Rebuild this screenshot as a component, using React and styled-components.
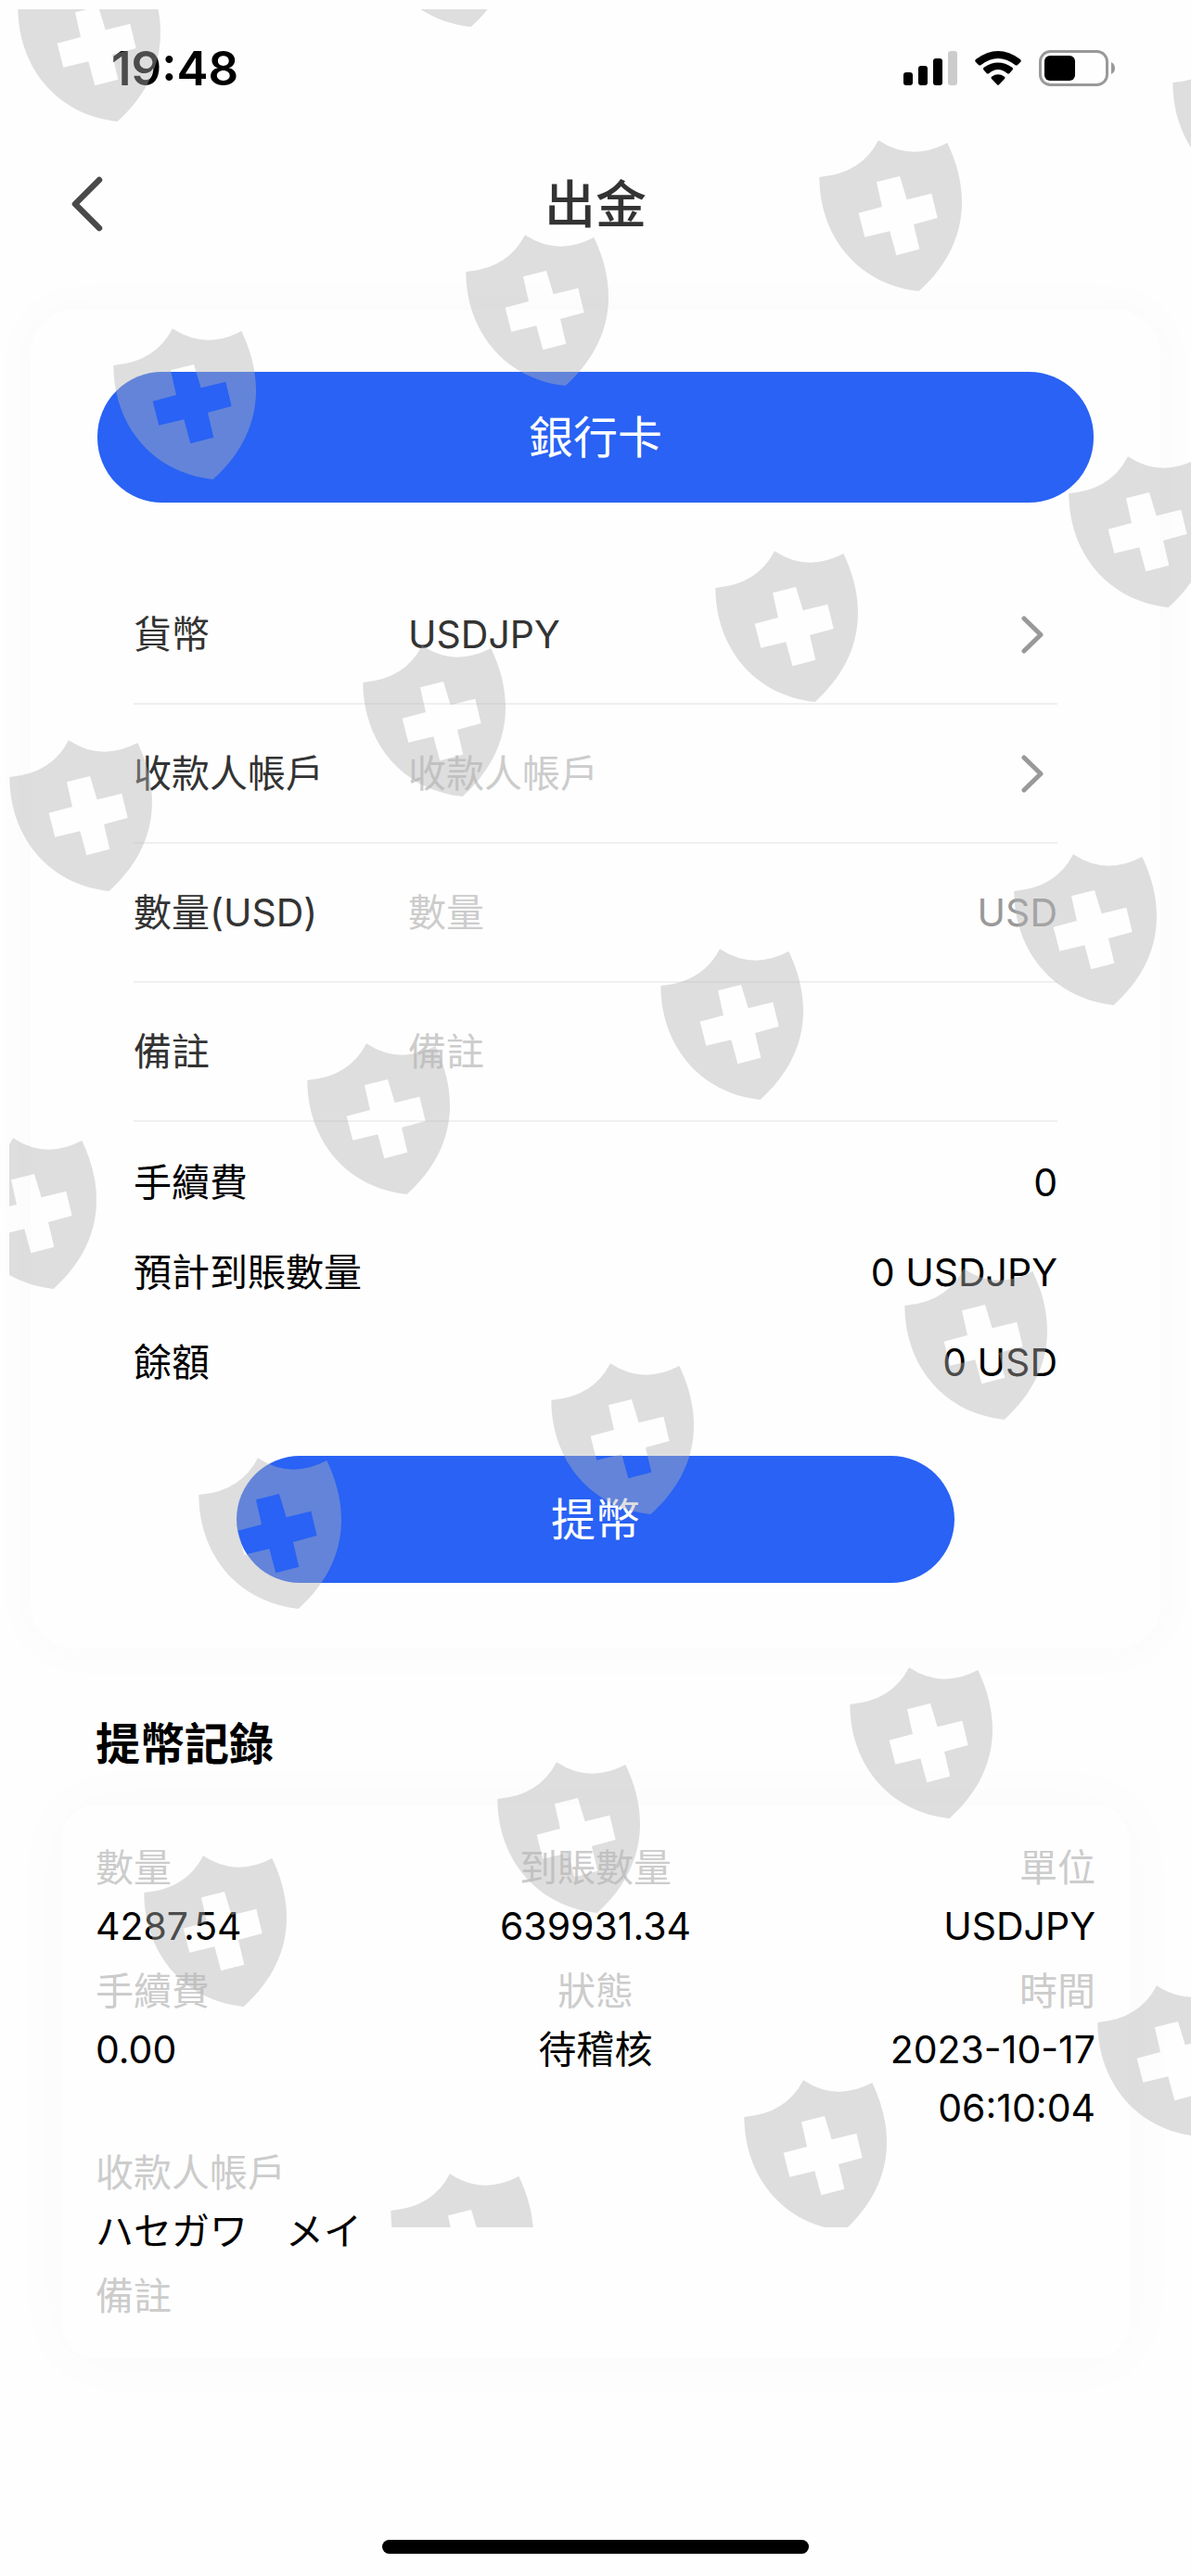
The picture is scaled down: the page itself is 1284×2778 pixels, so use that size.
import React from 'react'
import styled, { createGlobalStyle } from 'styled-components'

const GlobalStyle = createGlobalStyle`
  * {
    box-sizing: border-box;
  }
  body {
    margin: 0;
    background: #fefefe;
    color: #000;
    font-family: Inter, 'Noto Sans CJK TC', 'Noto Sans CJK JP', sans-serif;
    font-size: 41px;
    line-height: 63px;
  }
  button, input, select {
    margin: 0;
    padding: 0;
    border: 0;
    background: none;
    font: inherit;
    color: inherit;
  }
`
const Page = styled.div`
  position: relative;
  display: flex;
  flex-direction: column;
  min-height: 100vh;
  overflow: hidden;
`
const StatusBar = styled.div`
  display: flex;
  align-items: center;
  justify-content: space-between;
  height: 146px;
  padding: 0 82px 0 120px;
`
const Time = styled.span`
  font-size: 51px;
  font-weight: 600;
`
const StatusIcons = styled.div`
  display: flex;
  align-items: center;
  gap: 19px;
`
const Header = styled.header`
  display: grid;
  grid-template-columns: 1fr auto 1fr;
  align-items: center;
  height: 148px;
  padding: 0 76px;
  color: #333;
`
const BackButton = styled.button`
  display: flex;
  justify-self: start;
`
const Title = styled.h1`
  margin: 0;
  font-size: 55px;
  font-weight: 500;
`
const Card = styled.section`
  margin: 40px 33px 0;
  padding: 67px 72px 71px;
  border-radius: 48px;
  background: #fefefe;
  box-shadow: 0 0 48px 8px rgba(0, 0, 0, 0.02);
`
const PillButton = styled.button`
  display: block;
  width: ${p => p.$small ? '72%' : '100%'};
  height: ${p => p.$small ? 137 : 141}px;
  margin: 0 auto;
  border-radius: 70px;
  background: #2962f4;
  color: #fff;
  font-size: 48px;
`
const Form = styled.form`
  padding: 68px 39px 52px;
`
const Field = styled.div`
  display: flex;
  align-items: center;
  height: 150px;
  padding-right: ${p => p.$arrow ? 15 : 0}px;
  border-bottom: 2px solid #f0f0f0;
  color: #333;
`
const Label = styled.label`
  flex: none;
  width: 296px;
`
const Input = styled.input`
  flex: 1;
  min-width: 0;
  height: 63px;
  outline: none;
  &::placeholder {
    color: #ccc;
    opacity: 1;
  }
`
const Select = styled.select`
  flex: 1;
  min-width: 0;
  height: 63px;
  appearance: none;
  outline: none;
  color: ${p => p.$empty ? '#ccc' : '#333'};
`
const Unit = styled.span`
  color: #999;
`
const Summary = styled.dl`
  margin: 0;
  padding-top: 17px;
`
const SummaryRow = styled.div`
  display: flex;
  align-items: center;
  justify-content: space-between;
  height: 97px;
`
const Value = styled.dd`
  margin: 0;
`
const RecordTitle = styled.h2`
  margin: 67px 103px 0;
  font-size: 48px;
  font-weight: 700;
  line-height: 72px;
`
const RecordCard = styled.section`
  margin: 30px 67px 0;
  padding: 36px 36px 28px;
  border-radius: 36px;
  background: #fefefe;
  box-shadow: 0 0 72px 8px rgba(0, 0, 0, 0.02);
`
const Record = styled.dl`
  display: grid;
  grid-template-columns: repeat(3, 1fr);
  margin: 0;
`
const Cell = styled.div`
  grid-column: ${p => p.$wide ? '1 / -1' : 'auto'};
  padding-bottom: 7px;
  text-align: ${p => p.$align || 'left'};
`
const CellLabel = styled.dt`
  color: #ccc;
`
const HomeBar = styled.div`
  width: 460px;
  height: 15px;
  margin: auto auto 24px;
  border-radius: 8px;
  background: #000;
`
const Watermark = styled.svg`
  position: absolute;
  top: 10px;
  left: 10px;
  width: calc(100% - 10px);
  height: 2392px;
  pointer-events: none;
`

const shields = [
  [-4, -53], [377, -155], [1241, 28], [860, 130], [479, 232], [99, 333],
  [1129, 471], [748, 573], [368, 675], [-13, 777],
  [1070, 900], [689, 1002], [308, 1104], [-73, 1206],
  [952, 1347], [571, 1449], [191, 1551],
  [893, 1777], [513, 1879], [132, 1980],
  [1160, 2120], [779, 2222], [398, 2323],
]

const Shields = () => (
  <Watermark aria-hidden='true' fill='#b4b4b4' fillOpacity='0.425'>
    {shields.map(([x, y]) => (
      <path
        key={`${x},${y}`}
        transform={`translate(${x - 10} ${y - 10}) scale(0.3333)`}
        fillRule='evenodd'
        d='M261 64Q367 134 484 72C556 222 560 400 392 552C190 530 70 370 70 183Q206 172 261 64ZM255 199L273 279L197 299L217 377L298 358L319 436L394 416L375 336L452 315L433 236L353 256L330 180Z'
      />
    ))}
  </Watermark>
)

const Signal = () => (
  <svg width='58' height='37' viewBox='0 0 58 37'>
    <rect x='0' y='23' width='10' height='14' rx='3' />
    <rect x='16' y='16' width='10' height='21' rx='3' />
    <rect x='32' y='8' width='10' height='29' rx='3' />
    <rect x='48' y='0' width='10' height='37' rx='3' fill='#ccc' />
  </svg>
)

const Wifi = () => (
  <svg width='50' height='37' viewBox='0 0 150 111'>
    <path d='M3 27Q75 -27 147 27Q151 31 148 35L138 45Q134 48 130 45Q75 3 20 45Q16 48 12 45L2 35Q-1 31 3 27Z' />
    <path d='M29 53Q75 22 121 53Q125 57 122 61L112 72Q108 75 104 72Q75 48 46 72Q42 75 38 72L28 61Q25 57 29 53Z' />
    <path d='M54 83Q75 69 96 83Q99 87 96 90L78 109Q75 112 72 109L54 90Q51 87 54 83Z' />
  </svg>
)

const Battery = () => (
  <svg width='82' height='39' viewBox='0 0 82 39'>
    <rect x='1.5' y='1.5' width='72' height='36' rx='11' fill='none' stroke='#999' strokeWidth='3' />
    <rect x='6' y='6' width='33' height='27' rx='6' />
    <path d='M78 13Q82 15 82 19.500Q82 24 78 26Z' fill='#999' />
  </svg>
)

const Arrow = () => (
  <svg width='24' height='41' viewBox='0 0 24 41' fill='none' stroke='#999' strokeWidth='5' strokeLinecap='round' strokeLinejoin='round'>
    <path d='M3 3L21 20.500L3 38' />
  </svg>
)

const Back = () => (
  <svg width='35' height='60' viewBox='0 0 35 60' fill='none' stroke='#4a4a4a' strokeWidth='6.500' strokeLinecap='round' strokeLinejoin='round'>
    <path d='M31 4L5 30L31 56' />
  </svg>
)

const summary = [
  ['手續費', '0'],
  ['預計到賬數量', '0 USDJPY'],
  ['餘額', '0 USD'],
]

const record = [
  { label: '數量', value: '4287.54' },
  { label: '到賬數量', value: '639931.34', align: 'center' },
  { label: '單位', value: 'USDJPY', align: 'right' },
  { label: '手續費', value: '0.00' },
  { label: '狀態', value: '待稽核', align: 'center' },
  { label: '時間', value: '2023-10-17 06:10:04', align: 'right' },
  { label: '收款人帳戶', value: 'ハセガワ　メイ', wide: true },
  { label: '備註', value: '', wide: true },
]

const App = () => (
  <Page>
    <GlobalStyle />
    <StatusBar>
      <Time>19:48</Time>
      <StatusIcons>
        <Signal />
        <Wifi />
        <Battery />
      </StatusIcons>
    </StatusBar>
    <Header>
      <BackButton type='button' aria-label='返回'><Back /></BackButton>
      <Title>出金</Title>
    </Header>
    <Card>
      <PillButton type='button'>銀行卡</PillButton>
      <Form id='withdraw' onSubmit={evt => evt.preventDefault()}>
        <Field $arrow>
          <Label htmlFor='currency'>貨幣</Label>
          <Select id='currency'>
            <option>USDJPY</option>
          </Select>
          <Arrow />
        </Field>
        <Field $arrow>
          <Label htmlFor='payee'>收款人帳戶</Label>
          <Select id='payee' $empty>
            <option value=''>收款人帳戶</option>
          </Select>
          <Arrow />
        </Field>
        <Field>
          <Label htmlFor='amount'>數量(USD)</Label>
          <Input id='amount' inputMode='decimal' placeholder='數量' />
          <Unit>USD</Unit>
        </Field>
        <Field>
          <Label htmlFor='note'>備註</Label>
          <Input id='note' placeholder='備註' />
        </Field>
        <Summary>
          {summary.map(([label, value]) => (
            <SummaryRow key={label}>
              <dt>{label}</dt>
              <Value>{value}</Value>
            </SummaryRow>
          ))}
        </Summary>
      </Form>
      <PillButton $small type='submit' form='withdraw'>提幣</PillButton>
    </Card>
    <RecordTitle>提幣記錄</RecordTitle>
    <RecordCard>
      <Record>
        {record.map(({ label, value, align, wide }) => (
          <Cell key={label} $align={align} $wide={wide}>
            <CellLabel>{label}</CellLabel>
            <Value>{value}</Value>
          </Cell>
        ))}
      </Record>
    </RecordCard>
    <HomeBar />
    <Shields />
  </Page>
)

export default App
